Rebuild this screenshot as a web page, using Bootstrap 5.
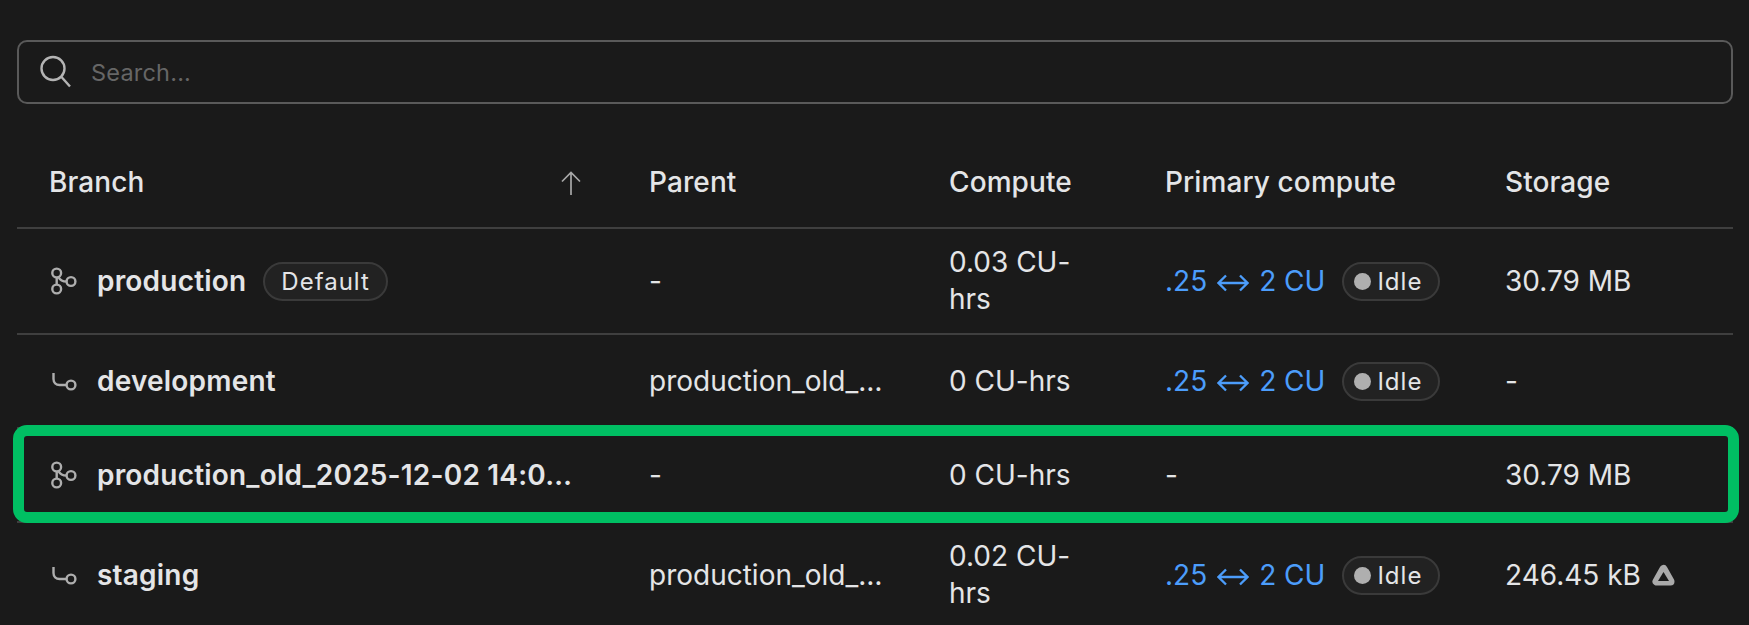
<!DOCTYPE html>
<html lang="en">
<head>
  <meta charset="UTF-8" />
  <title>Branches</title>
  <link href="https://cdn.jsdelivr.net/npm/bootstrap@5.3.3/dist/css/bootstrap.min.css" rel="stylesheet" />
  <style>
    body {
      background-color: #1a1a1a;
      color: #e4e5e7;
      font-family: "Inter", "Liberation Sans", sans-serif;
      font-size: 28px;
      overflow: hidden;
    }

    .page-wrap {
      padding: 40px 16px 0 17px;
      position: relative;
    }

    /* search */
    .search-box {
      height: 64px;
      border: 2px solid #5a5a5a;
      border-radius: 10px;
      padding-left: 20px;
      gap: 18px;
    }

    .search-box input {
      background: transparent;
      border: 0;
      outline: 0;
      flex: 1;
      color: #e4e5e7;
      font-size: 23.5px;
      letter-spacing: .2px;
      padding-top: 2px;
    }

    .search-box input::placeholder {
      color: #666;
      opacity: 1;
    }

    /* table */
    .branch-table {
      --bs-table-bg: transparent;
      --bs-table-color: #e4e5e7;
      --bs-table-border-color: #3f3f3f;
      margin: 34px 0 0;
      table-layout: fixed;
      width: 100%;
    }

    .branch-table th,
    .branch-table td {
      padding: 0 32px;
      vertical-align: middle;
      line-height: 37px;
      border-bottom-width: 2px;
    }

    .branch-table th {
      height: 90px;
      font-weight: 500;
      letter-spacing: .1px;
    }

    .branch-table td {
      height: 94px;
      font-weight: 400;
    }

    .branch-table tr.two-line td {
      height: 106px;
    }

    .col-branch { width: 600px; }
    .col-parent { width: 300px; }
    .col-compute { width: 216px; }
    .col-primary { width: 340px; }

    .branch-name {
      font-weight: 600;
      letter-spacing: .2px;
    }

    .branch-icon {
      width: 29px;
      height: 30px;
      margin-right: 19px;
      flex: none;
    }

    .sort-icon {
      margin-right: 3px;
    }

    .pill-tag {
      height: 39px;
      border: 2px solid #3a3a3a;
      border-radius: 20px;
      background: #222;
      font-size: 24px;
      letter-spacing: 1px;
      line-height: 35px;
      color: #e4e5e7;
    }

    .pill-default {
      margin-left: 17px;
      padding: 0 16px;
    }

    .pill-idle {
      margin-left: 17px;
      padding: 0 16px 0 10px;
      gap: 6px;
    }

    .idle-dot {
      width: 17px;
      height: 17px;
      border-radius: 50%;
      background: #afafaf;
    }

    .cu-range {
      color: #4c9dfb;
    }

    .cu-range svg {
      margin: 0 10px;
    }

    .limit-icon {
      margin-left: 11px;
    }

    /* annotation drawn on top of the table */
    .row-marker {
      position: absolute;
      left: 13px;
      top: 425px;
      width: 1726px;
      height: 98px;
      border: 11px solid #00bf63;
      border-radius: 14px;
      pointer-events: none;
    }
  </style>
</head>
<body>

  <svg width="0" height="0" class="d-block">
    <symbol id="ico-branch" viewBox="0 0 29 30">
      <g fill="none" stroke="#aeaeae" stroke-width="2.4">
        <circle cx="7.7" cy="7" r="4.4" />
        <circle cx="7.7" cy="23" r="4.4" />
        <circle cx="22" cy="15.5" r="4.4" />
        <path d="M7.7 11.4V18.6M9.5 11.2c1.5 2.8 4 4.3 8.1 4.3" />
      </g>
    </symbol>
    <symbol id="ico-child" viewBox="0 0 29 30">
      <g fill="none" stroke="#aeaeae" stroke-width="2.4">
        <path d="M4.5 7v6c0 3.5 2.5 6 6 6h7" />
        <circle cx="22" cy="19" r="4.4" />
      </g>
    </symbol>
    <symbol id="ico-both" viewBox="0 0 32 20">
      <path d="M1.5 10H30.5M9 2.5L1.5 10L9 17.5M23 2.5L30.5 10L23 17.5" fill="none" stroke="#4c9dfb" stroke-width="2.3" />
    </symbol>
  </svg>

  <div class="page-wrap">

    <div class="search-box d-flex align-items-center">
      <svg width="32" height="34" viewBox="0 0 32 34" fill="none" stroke="#b4b4b4" stroke-width="2.4">
        <circle cx="14" cy="13.5" r="11.5" />
        <path d="M22.5 22L31 31.5" />
      </svg>
      <input type="text" placeholder="Search..." />
    </div>

    <table class="table branch-table">
      <thead>
        <tr>
          <th class="col-branch">
            <div class="d-flex justify-content-between align-items-center">
              <span>Branch</span>
              <svg class="sort-icon" width="22" height="24" viewBox="0 0 22 24" fill="none" stroke="#a8a8a8" stroke-width="1.7">
                <path d="M11 1.5V24M2 10.5L11 1.5L20 10.5" />
              </svg>
            </div>
          </th>
          <th class="col-parent">Parent</th>
          <th class="col-compute">Compute</th>
          <th class="col-primary">Primary compute</th>
          <th>Storage</th>
        </tr>
      </thead>
      <tbody>
        <tr class="two-line">
          <td>
            <div class="d-flex align-items-center">
              <svg class="branch-icon"><use href="#ico-branch" /></svg>
              <span class="branch-name">production</span>
              <span class="pill-tag pill-default">Default</span>
            </div>
          </td>
          <td>-</td>
          <td>0.03 CU-hrs</td>
          <td>
            <div class="d-flex align-items-center">
              <span class="cu-range text-nowrap">.25<svg width="32" height="20"><use href="#ico-both" /></svg>2 CU</span>
              <span class="pill-tag pill-idle d-flex align-items-center"><span class="idle-dot"></span>Idle</span>
            </div>
          </td>
          <td>30.79 MB</td>
        </tr>
        <tr>
          <td>
            <div class="d-flex align-items-center">
              <svg class="branch-icon"><use href="#ico-child" /></svg>
              <span class="branch-name">development</span>
            </div>
          </td>
          <td class="text-nowrap">production_old_…</td>
          <td>0 CU-hrs</td>
          <td>
            <div class="d-flex align-items-center">
              <span class="cu-range text-nowrap">.25<svg width="32" height="20"><use href="#ico-both" /></svg>2 CU</span>
              <span class="pill-tag pill-idle d-flex align-items-center"><span class="idle-dot"></span>Idle</span>
            </div>
          </td>
          <td>-</td>
        </tr>
        <tr>
          <td>
            <div class="d-flex align-items-center">
              <svg class="branch-icon"><use href="#ico-branch" /></svg>
              <span class="branch-name text-nowrap">production_old_2025-12-02 14:0…</span>
            </div>
          </td>
          <td>-</td>
          <td>0 CU-hrs</td>
          <td>-</td>
          <td>30.79 MB</td>
        </tr>
        <tr class="two-line">
          <td>
            <div class="d-flex align-items-center">
              <svg class="branch-icon"><use href="#ico-child" /></svg>
              <span class="branch-name">staging</span>
            </div>
          </td>
          <td class="text-nowrap">production_old_…</td>
          <td>0.02 CU-hrs</td>
          <td>
            <div class="d-flex align-items-center">
              <span class="cu-range text-nowrap">.25<svg width="32" height="20"><use href="#ico-both" /></svg>2 CU</span>
              <span class="pill-tag pill-idle d-flex align-items-center"><span class="idle-dot"></span>Idle</span>
            </div>
          </td>
          <td>
            <div class="d-flex align-items-center">
              246.45 kB
              <svg class="limit-icon" width="23" height="22" viewBox="0 0 23 22">
                <path d="M11.5 5L4.5 17.5H18.5Z" fill="#aaa" stroke="#aaa" stroke-width="8" stroke-linejoin="round" />
                <path d="M11.5 8L6 17H17Z" fill="#1a1a1a" />
              </svg>
            </div>
          </td>
        </tr>
      </tbody>
    </table>

    <div class="row-marker"></div>
  </div>

</body>
</html>
